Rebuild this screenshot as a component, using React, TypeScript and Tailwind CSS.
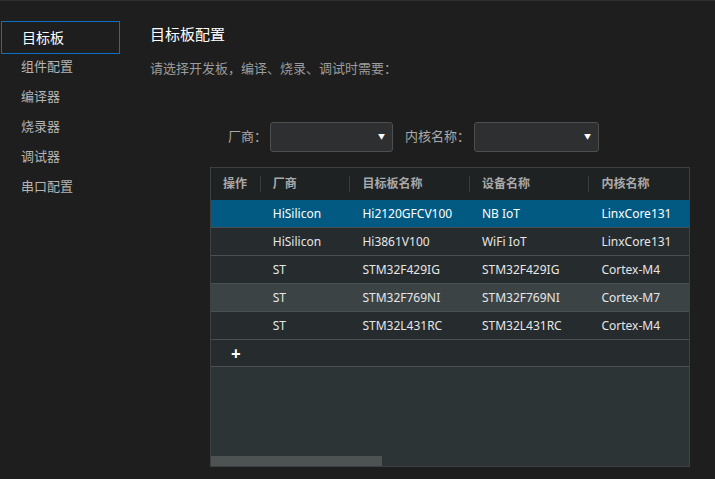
import React from "react";

const FONT = '"Noto Sans", "Noto Sans CJK SC", sans-serif';

const navItems = ["目标板", "组件配置", "编译器", "烧录器", "调试器", "串口配置"];

interface BoardRow {
  vendor: string;
  board: string;
  device: string;
  core: string;
}

const rows: BoardRow[] = [
  { vendor: "HiSilicon", board: "Hi2120GFCV100", device: "NB IoT", core: "LinxCore131" },
  { vendor: "HiSilicon", board: "Hi3861V100", device: "WiFi IoT", core: "LinxCore131" },
  { vendor: "ST", board: "STM32F429IG", device: "STM32F429IG", core: "Cortex-M4" },
  { vendor: "ST", board: "STM32F769NI", device: "STM32F769NI", core: "Cortex-M7" },
  { vendor: "ST", board: "STM32L431RC", device: "STM32L431RC", core: "Cortex-M4" },
];

function Select({ width }: { width: string }) {
  return (
    <div
      className={`${width} relative h-[30px] rounded-[3px] border border-[#4e4e4e] bg-[#2d2f30]`}
    >
      <span className="absolute right-[7px] top-[10px] text-[7px] leading-none text-white">▼</span>
    </div>
  );
}

export default function App() {
  return (
    <div
      className="flex h-[479px] w-[715px] overflow-hidden border-t border-[#2e2e2e] bg-[#1e1e1e]"
      style={{ fontFamily: FONT }}
    >
      {/* 左侧导航 */}
      <div className="flex w-[120px] shrink-0 flex-col pt-[20px] pl-[1px]">
        <div className="flex h-[33px] w-[119px] items-center border border-[#0e6fc0] pl-[20px] text-[14px] text-white">
          {navItems[0]}
        </div>
        <div className="-mt-[2px] flex flex-col">
          {navItems.slice(1).map((item) => (
            <div
              key={item}
              className="flex h-[30px] items-center pl-[20px] text-[13px] text-[#b4b4b4]"
            >
              {item}
            </div>
          ))}
        </div>
      </div>

      {/* 主区域 */}
      <div className="flex flex-1 flex-col pl-[30px]">
        <div className="mt-[22px] text-[15px] leading-[22px] text-white">目标板配置</div>
        <div className="mt-[13px] text-[13px] leading-[20px] text-[#9c9c9c]">
          请选择开发板，编译、烧录、调试时需要：
        </div>

        <div className="mt-[44px] flex items-center pl-[78px] text-[13px] text-[#a8a8a8]">
          <span className="mr-[3px]">厂商：</span>
          <Select width="w-[123px]" />
          <span className="ml-[12px] mr-[4px]">内核名称：</span>
          <Select width="w-[125px]" />
        </div>

        {/* 表格 */}
        <div className="ml-[60px] mt-[15px] flex h-[300px] w-[480px] flex-col overflow-hidden border border-[#3e4142] bg-[#2c3436]">
          <div className="flex h-[32px] shrink-0 items-center bg-[#1f2223] text-[12px] font-bold text-[#a9a9a9]">
            <div className="flex w-[50px] items-center justify-between pl-[12px]">
              操作<span className="h-[16px] w-px bg-[#3a3d3e]" />
            </div>
            <div className="flex w-[90px] items-center justify-between pl-[12px]">
              厂商<span className="h-[16px] w-px bg-[#3a3d3e]" />
            </div>
            <div className="flex w-[120px] items-center justify-between pl-[12px]">
              目标板名称<span className="h-[16px] w-px bg-[#3a3d3e]" />
            </div>
            <div className="flex w-[120px] items-center justify-between pl-[12px]">
              设备名称<span className="h-[16px] w-px bg-[#3a3d3e]" />
            </div>
            <div className="flex w-[100px] items-center pl-[12px]">内核名称</div>
          </div>

          {rows.map((r, i) => (
            <div
              key={r.board}
              className={`flex h-[28px] shrink-0 items-center border-b border-[#4a4f51] text-[12px] ${
                i === 0 ? "bg-[#025a83] text-white" : i === 3 ? "bg-[#3b4345] text-[#e6e6e6]" : "bg-[#262b2e] text-[#e6e6e6]"
              }`}
            >
              <div className="w-[50px]" />
              <div className="w-[90px] pl-[12px]">{r.vendor}</div>
              <div className="w-[120px] pl-[12px]">{r.board}</div>
              <div className="w-[120px] pl-[12px]">{r.device}</div>
              <div className="w-[100px] pl-[12px]">{r.core}</div>
            </div>
          ))}

          <div className="flex h-[27px] shrink-0 items-center border-b border-[#4a4f51] bg-[#262b2e] pl-[20px] text-[17px] font-bold leading-none text-white">
            +
          </div>

          <div className="flex flex-1 flex-col justify-end">
            <div className="h-[10px] w-[171px] bg-[#4d5252]" />
          </div>
        </div>
      </div>
    </div>
  );
}
